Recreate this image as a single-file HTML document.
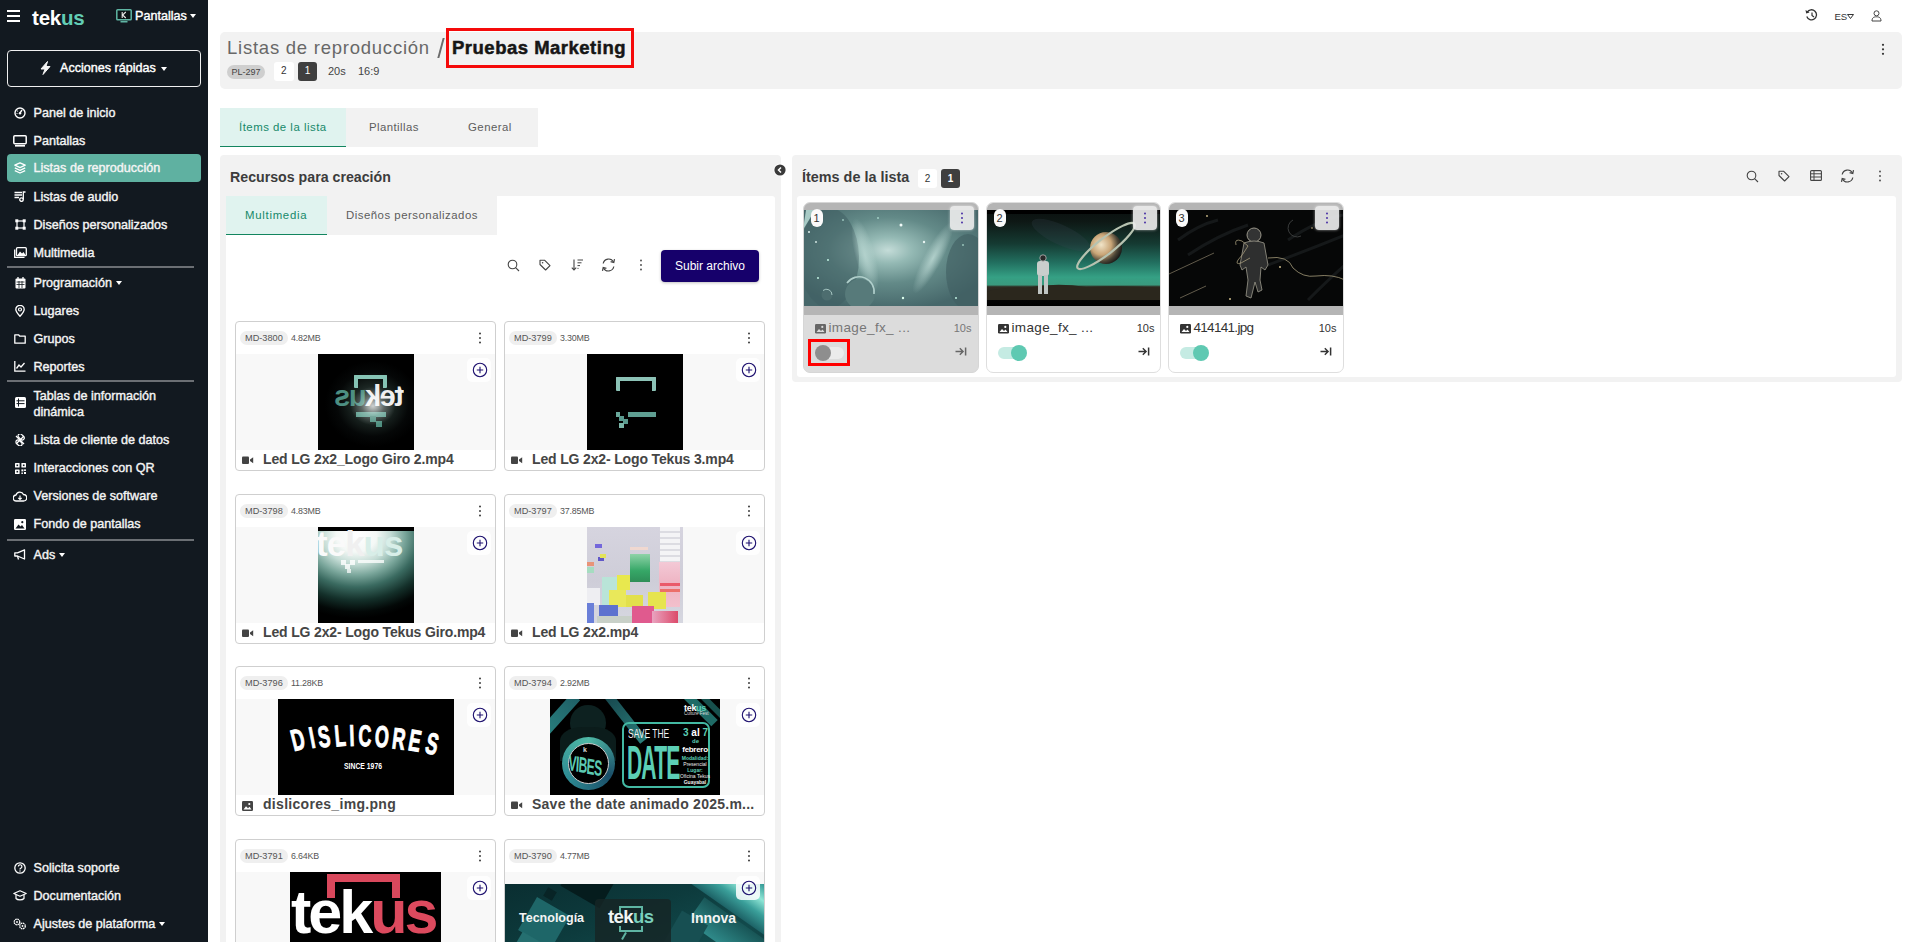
<!DOCTYPE html>
<html><head><meta charset="utf-8">
<style>
*{box-sizing:border-box;margin:0;padding:0}
html,body{width:1913px;height:942px;overflow:hidden;background:#fff;font-family:"Liberation Sans",sans-serif;color:#333}
.abs{position:absolute}
#sb{position:absolute;left:0;top:0;width:208px;height:942px;background:#121920;color:#f4f4f4}
.nav{position:absolute;left:7px;width:194px;height:28px;border-radius:4px;font-size:12.6px;font-weight:normal;-webkit-text-stroke:0.4px #f4f4f4;line-height:28px;padding-left:26.5px;white-space:nowrap}
.nav.act{background:#5fb1a1}
.nav .ic{position:absolute;left:6px;top:0;width:14px;height:28px;display:flex;align-items:center;justify-content:center}
.caret{display:inline-block;margin-left:4px;vertical-align:2px;width:0;height:0;border-left:3.8px solid transparent;border-right:3.8px solid transparent;border-top:4.5px solid #fff}
.sep{position:absolute;left:7px;width:187px;height:2px;background:#6b6f74}
</style></head><body>
<div id="sb">
  <!-- hamburger -->
  <div class="abs" style="left:7px;top:10px;width:13px;height:2px;background:#fff"></div>
  <div class="abs" style="left:7px;top:15px;width:13px;height:2px;background:#fff"></div>
  <div class="abs" style="left:7px;top:20px;width:13px;height:2px;background:#fff"></div>
  <div class="abs t" style="left:32px;top:5.5px;font-size:20.5px;font-weight:bold;letter-spacing:-0.2px;color:#fff">tek<span style="color:#62cdb5">us</span></div>
  <svg class="abs" style="left:116px;top:9px" width="16" height="14" viewBox="0 0 16 14"><rect x="0.8" y="0.8" width="14.4" height="10" rx="0.8" fill="#0d1418" stroke="#5fb5a3" stroke-width="1.5"/><rect x="4.5" y="12" width="7" height="1.5" fill="#5fb5a3"/><path d="M6.2 3 V9 M9.8 3 L6.6 6 L9.8 9" fill="none" stroke="#e8e8e8" stroke-width="1.1"/></svg>
  <div class="abs t" style="left:135px;top:9px;font-size:12.6px;-webkit-text-stroke:0.4px #fff;color:#fff">Pantallas</div>
  <div class="abs" style="left:190px;top:14px;width:0;height:0;border-left:3.5px solid transparent;border-right:3.5px solid transparent;border-top:4px solid #fff"></div>

  <div class="abs" style="left:7px;top:50px;width:194px;height:37px;border:1.6px solid #f0f0f0;border-radius:4px"></div>
  <svg class="abs" style="left:40px;top:61px" width="11" height="14" viewBox="0 0 11 14"><path d="M7.5 0.5 L1 8 H5 L3 13.5 L10 5.5 H6 Z" fill="#f4f4f4" stroke="#f4f4f4" stroke-width="1" stroke-linejoin="round"/></svg>
  <div class="abs t" style="left:60px;top:61px;font-size:12.6px;-webkit-text-stroke:0.4px #fff;color:#fff">Acciones rápidas</div>
  <div class="abs" style="left:160.5px;top:66.5px;width:0;height:0;border-left:3.8px solid transparent;border-right:3.8px solid transparent;border-top:4.5px solid #fff"></div>

  <div class="nav" style="top:98.5px"><i class="ic"><svg width="12" height="12" viewBox="0 0 12 12"><circle cx="6" cy="6" r="5" fill="none" stroke="#fff" stroke-width="1.4"/><path d="M6 6 L8 3" stroke="#fff" stroke-width="1.4"/><circle cx="6" cy="6.3" r="1.2" fill="#fff"/><circle cx="3.5" cy="4" r=".6" fill="#fff"/><circle cx="3" cy="6.5" r=".6" fill="#fff"/></svg></i>Panel de inicio</div>
  <div class="nav" style="top:126.5px"><i class="ic"><svg width="14" height="12" viewBox="0 0 14 12"><rect x="0.8" y="0.8" width="12.4" height="8" rx="1" fill="none" stroke="#fff" stroke-width="1.5"/><rect x="2" y="10" width="10" height="1.6" fill="#fff"/></svg></i>Pantallas</div>
  <div class="nav act" style="top:154px"><i class="ic"><svg width="12" height="12" viewBox="0 0 12 12"><path d="M6 0.8 L11.2 3.2 L6 5.6 L0.8 3.2 Z" fill="none" stroke="#fff" stroke-width="1.3" stroke-linejoin="round"/><path d="M0.8 5.9 L6 8.3 L11.2 5.9 M0.8 8.6 L6 11 L11.2 8.6" fill="none" stroke="#fff" stroke-width="1.3" stroke-linejoin="round"/></svg></i>Listas de reproducción</div>
  <div class="nav" style="top:182.5px"><i class="ic"><svg width="12" height="11" viewBox="0 0 12 11"><path d="M0.5 1.5 H8 M0.5 4 H8 M0.5 6.5 H5" stroke="#fff" stroke-width="1.4"/><circle cx="7.5" cy="8.6" r="1.8" fill="none" stroke="#fff" stroke-width="1.3"/><path d="M9.3 8.6 V1 H11.5" fill="none" stroke="#fff" stroke-width="1.3"/></svg></i>Listas de audio</div>
  <div class="nav" style="top:210.5px"><i class="ic"><svg width="11" height="11" viewBox="0 0 11 11"><rect x="2" y="2" width="7" height="7" fill="none" stroke="#fff" stroke-width="1.2"/><rect x="0.3" y="0.3" width="3" height="3" fill="#fff"/><rect x="7.7" y="0.3" width="3" height="3" fill="#fff"/><rect x="0.3" y="7.7" width="3" height="3" fill="#fff"/><rect x="7.7" y="7.7" width="3" height="3" fill="#fff"/></svg></i>Diseños personalizados</div>
  <div class="nav" style="top:238.5px"><i class="ic"><svg width="13" height="11" viewBox="0 0 13 11"><rect x="2.5" y="0.7" width="9.8" height="8" rx="1" fill="none" stroke="#fff" stroke-width="1.3"/><path d="M0.7 2.5 V10.3 H10.5" fill="none" stroke="#fff" stroke-width="1.3"/><path d="M3.5 8 L6 4.5 L8 6.5 L9.5 5 L11.5 8 Z" fill="#fff"/></svg></i>Multimedia</div>
  <div class="sep" style="top:266px"></div>
  <div class="nav" style="top:268.6px"><i class="ic"><svg width="11" height="12" viewBox="0 0 11 12"><rect x="0.5" y="1.5" width="10" height="10" rx="1" fill="#fff"/><path d="M3 0 V3 M8 0 V3" stroke="#fff" stroke-width="1.3"/><path d="M1.5 5 H9.5 M1.5 7.5 H9.5 M4 4 V11 M7 4 V11" stroke="#121920" stroke-width="0.8"/></svg></i>Programación<span class="caret"></span></div>
  <div class="nav" style="top:296.5px"><i class="ic"><svg width="10" height="12" viewBox="0 0 10 12"><path d="M5 11.3 C2 8 0.8 6 0.8 4.5 A4.2 4.2 0 0 1 9.2 4.5 C9.2 6 8 8 5 11.3 Z" fill="none" stroke="#fff" stroke-width="1.3"/><circle cx="5" cy="4.5" r="1.5" fill="none" stroke="#fff" stroke-width="1.2"/></svg></i>Lugares</div>
  <div class="nav" style="top:324.5px"><i class="ic"><svg width="12" height="10" viewBox="0 0 12 10"><path d="M0.8 0.8 H4.5 L5.8 2.2 H11.2 V9.2 H0.8 Z" fill="none" stroke="#fff" stroke-width="1.3" stroke-linejoin="round"/></svg></i>Grupos</div>
  <div class="nav" style="top:352.5px"><i class="ic"><svg width="12" height="11" viewBox="0 0 12 11"><path d="M0.8 0 V10.2 H11.5" fill="none" stroke="#fff" stroke-width="1.3"/><path d="M2.5 7.5 L5 4 L7 6 L10.5 2" fill="none" stroke="#fff" stroke-width="1.3"/></svg></i>Reportes</div>
  <div class="sep" style="top:380px"></div>
  <div class="nav" style="top:388px;line-height:16px"><i class="ic"><svg width="11" height="11" viewBox="0 0 11 11"><rect x="0" y="0" width="11" height="11" rx="1.5" fill="#fff"/><path d="M3.5 1.5 V9.5 M1.5 3.8 H9.5 M1.5 6.6 H9.5" stroke="#121920" stroke-width="1"/></svg></i>Tablas de información<br>dinámica</div>
  <div class="nav" style="top:426.4px"><i class="ic"><svg width="12" height="12" viewBox="0 0 12 12"><path d="M2 2 L10 10 M10 2 L2 10" stroke="#fff" stroke-width="1.3"/><rect x="3.5" y="0.8" width="7" height="4" rx="2" transform="rotate(45 7 3)" fill="none" stroke="#fff" stroke-width="1.2"/><rect x="1.5" y="7" width="7" height="4" rx="2" transform="rotate(45 5 9)" fill="none" stroke="#fff" stroke-width="1.2"/></svg></i>Lista de cliente de datos</div>
  <div class="nav" style="top:454.4px"><i class="ic"><svg width="11" height="11" viewBox="0 0 11 11"><rect x="0" y="0" width="4.6" height="4.6" rx=".6" fill="#fff"/><rect x="6.4" y="0" width="4.6" height="4.6" rx=".6" fill="#fff"/><rect x="0" y="6.4" width="4.6" height="4.6" rx=".6" fill="#fff"/><rect x="6.4" y="6.4" width="2" height="2" fill="#fff"/><rect x="9" y="9" width="2" height="2" fill="#fff"/><rect x="9" y="6.4" width="2" height="1.5" fill="#fff"/><rect x="6.4" y="9.5" width="1.5" height="1.5" fill="#fff"/><rect x="1.5" y="1.5" width="1.6" height="1.6" fill="#121920"/><rect x="7.9" y="1.5" width="1.6" height="1.6" fill="#121920"/><rect x="1.5" y="7.9" width="1.6" height="1.6" fill="#121920"/></svg></i>Interacciones con QR</div>
  <div class="nav" style="top:482.4px"><i class="ic"><svg width="14" height="11" viewBox="0 0 14 11"><path d="M3.5 10 A3 3 0 0 1 3 4 A4 4 0 0 1 10.5 3.5 A3.2 3.2 0 0 1 10.5 10 Z" fill="none" stroke="#fff" stroke-width="1.3"/><path d="M7 4.5 V8.5 M5.3 6.8 L7 8.5 L8.7 6.8" fill="none" stroke="#fff" stroke-width="1.2"/></svg></i>Versiones de software</div>
  <div class="nav" style="top:510.4px"><i class="ic"><svg width="12" height="11" viewBox="0 0 12 11"><rect x="0" y="0" width="12" height="11" rx="1.2" fill="#fff"/><path d="M1.5 9.5 L4.5 5.5 L6.5 7.5 L8 6 L10.5 9.5 Z" fill="#121920"/><circle cx="8.3" cy="3.2" r="1.1" fill="#121920"/></svg></i>Fondo de pantallas</div>
  <div class="sep" style="top:539px"></div>
  <div class="nav" style="top:540.7px"><i class="ic"><svg width="13" height="11" viewBox="0 0 13 11"><path d="M0.8 3.8 H3.5 L10.5 0.8 V10 L3.5 7 H0.8 Z" fill="none" stroke="#fff" stroke-width="1.3" stroke-linejoin="round"/><path d="M3.5 7 L4.5 10.5" stroke="#fff" stroke-width="1.3"/></svg></i>Ads<span class="caret"></span></div>

  <div class="nav" style="top:853.7px"><i class="ic"><svg width="12" height="12" viewBox="0 0 12 12"><circle cx="6" cy="6" r="5.2" fill="none" stroke="#fff" stroke-width="1.3"/><path d="M4.3 4.6 A1.8 1.8 0 1 1 6.6 6.3 C6.1 6.5 6 6.8 6 7.4" fill="none" stroke="#fff" stroke-width="1.2"/><circle cx="6" cy="9" r=".7" fill="#fff"/></svg></i>Solicita soporte</div>
  <div class="nav" style="top:881.5px"><i class="ic"><svg width="14" height="11" viewBox="0 0 14 11"><path d="M7 0.8 L13.2 3.5 L7 6.2 L0.8 3.5 Z" fill="none" stroke="#fff" stroke-width="1.2" stroke-linejoin="round"/><path d="M3 4.8 V8.5 C4.5 10.3 9.5 10.3 11 8.5 V4.8" fill="none" stroke="#fff" stroke-width="1.2"/></svg></i>Documentación</div>
  <div class="nav" style="top:909.8px"><i class="ic"><svg width="14" height="12" viewBox="0 0 14 12"><circle cx="4" cy="4" r="2.8" fill="none" stroke="#fff" stroke-width="1.3" stroke-dasharray="1.6 .6"/><circle cx="9.5" cy="8" r="2.8" fill="none" stroke="#fff" stroke-width="1.3" stroke-dasharray="1.6 .6"/><circle cx="4" cy="4" r=".9" fill="#fff"/><circle cx="9.5" cy="8" r=".9" fill="#fff"/></svg></i>Ajustes de plataforma<span class="caret"></span></div>
</div>

<!-- MAIN -->
<div id="main">
  <!-- top right -->
  <svg class="abs" style="left:1805px;top:9px" width="13" height="12" viewBox="0 0 13 12"><path d="M2.2 3.2 A5 5 0 1 1 1.8 7.5" fill="none" stroke="#333" stroke-width="1.3"/><path d="M0.5 1 L1.2 4.6 L4.6 3.6 Z" fill="#333"/><path d="M7 3.5 V6.5 L9 8" fill="none" stroke="#333" stroke-width="1.2"/></svg>
  <div class="abs t" style="left:1834.5px;top:10.5px;font-size:9.6px;color:#333;letter-spacing:-0.2px">ES</div>
  <svg class="abs" style="left:1846.5px;top:13.5px" width="7" height="5" viewBox="0 0 7 5"><path d="M0.5 0.5 H6.5 L3.5 4.5 Z" fill="none" stroke="#333" stroke-width="1"/></svg>
  <svg class="abs" style="left:1871px;top:10px" width="11" height="12" viewBox="0 0 11 12"><circle cx="5.5" cy="3.3" r="2.5" fill="none" stroke="#444" stroke-width="1"/><path d="M1 11 C1 7.5 3 6.8 5.5 6.8 C8 6.8 10 7.5 10 11 Z" fill="none" stroke="#444" stroke-width="1"/></svg>

  <!-- header -->
  <div class="abs" style="left:220px;top:32px;width:1682px;height:57px;background:#f2f2f2;border-radius:5px"></div>
  <div class="abs t" id="h1a" style="left:227px;top:37.2px;font-size:18.5px;letter-spacing:0.76px;color:#686868;white-space:nowrap">Listas de reproducción</div>
  <div class="abs" style="left:439.5px;top:37.5px;width:1.6px;height:20px;background:#6c6c6c;transform:skewX(-15deg)"></div>
  <div class="abs t" id="h1b" style="left:452px;top:37.2px;font-size:18.5px;letter-spacing:0.5px;font-weight:bold;color:#161616;-webkit-text-stroke:0.5px #161616;white-space:nowrap">Pruebas Marketing</div>
  <div class="abs" style="left:445.5px;top:27.5px;width:188px;height:40.5px;border:3px solid #f50a0a"></div>
  <div class="abs t" style="left:227px;top:65px;width:38px;height:14px;background:#cfcfcf;border-radius:7px;font-size:9px;line-height:14px;text-align:center;color:#444">PL-297</div>
  <div class="abs t" style="left:274px;top:62px;width:19.5px;height:18.5px;background:#fff;border-radius:3px;font-size:10px;line-height:18px;text-align:center;color:#333">2</div>
  <div class="abs t" style="left:298px;top:62px;width:19px;height:18.5px;background:#3f3f3f;border-radius:3px;font-size:10px;line-height:18px;text-align:center;color:#fff">1</div>
  <div class="abs t" style="left:328px;top:65px;font-size:11px;color:#444">20s</div>
  <div class="abs t" style="left:358px;top:65px;font-size:11px;color:#444">16:9</div>
  <svg class="abs" style="left:1881px;top:43px" width="4" height="13" viewBox="0 0 4 13"><circle cx="2" cy="1.8" r="1.1" fill="#333"/><circle cx="2" cy="6.3" r="1.1" fill="#333"/><circle cx="2" cy="10.8" r="1.1" fill="#333"/></svg>

  <!-- tabs -->
  <div class="abs" style="left:220px;top:108px;width:318px;height:39px;background:#f2f2f2"></div>
  <div class="abs" style="left:220px;top:108px;width:126px;height:39px;background:#e0f3ef;border-bottom:1.5px solid #12855f"></div>
  <div class="abs t" style="left:239px;top:120.5px;font-size:11.4px;letter-spacing:0.5px;color:#16896a">Ítems de la lista</div>
  <div class="abs t" style="left:369px;top:120.5px;font-size:11.4px;letter-spacing:0.42px;color:#5c5c5c">Plantillas</div>
  <div class="abs t" style="left:468px;top:120.5px;font-size:11.4px;letter-spacing:0.48px;color:#5c5c5c">General</div>

  <!-- left panel -->
  <div class="abs" style="left:220px;top:155px;width:561px;height:800px;background:#f2f2f2;border-radius:4px"></div>
  <div class="abs t" style="left:230px;top:169px;font-size:14.2px;font-weight:bold;color:#3c3c3c">Recursos para creación</div>
  <div class="abs" style="left:226px;top:196px;width:549px;height:760px;background:#fff;border-radius:3px"></div>
  <div class="abs" style="left:226px;top:196px;width:271px;height:39px;background:#f2f2f2"></div>
  <div class="abs" style="left:226px;top:196px;width:101px;height:39px;background:#e0f3ef;border-bottom:1.5px solid #12855f"></div>
  <div class="abs t" style="left:245px;top:208.5px;font-size:11.4px;letter-spacing:0.72px;color:#16896a">Multimedia</div>
  <div class="abs t" style="left:346px;top:208.5px;font-size:11.4px;letter-spacing:0.5px;color:#5c5c5c">Diseños personalizados</div>
  <svg class="abs" style="left:773px;top:163px" width="14" height="14" viewBox="0 0 14 14"><circle cx="7" cy="7" r="6.5" fill="#fff"/><circle cx="7" cy="7" r="5.6" fill="#3a3a3a"/><path d="M8 4.5 L5.5 7 L8 9.5" fill="none" stroke="#fff" stroke-width="1.5"/></svg>

  <!-- toolbar -->
  <svg class="abs" style="left:507px;top:259px" width="13" height="13" viewBox="0 0 13 13"><circle cx="5.5" cy="5.5" r="4.3" fill="none" stroke="#444" stroke-width="1.1"/><path d="M8.6 8.6 L12 12" stroke="#444" stroke-width="1.1"/></svg>
  <svg class="abs" style="left:539px;top:259px" width="12" height="12" viewBox="0 0 12 12"><path d="M1 1.2 H5.5 L11 6.6 L6.6 11 L1 5.5 Z" fill="none" stroke="#444" stroke-width="1.1" stroke-linejoin="round"/><circle cx="3.6" cy="3.7" r="0.8" fill="#444"/></svg>
  <svg class="abs" style="left:571px;top:259px" width="13" height="12" viewBox="0 0 13 12"><path d="M3 0.5 V11 M0.8 8.6 L3 11 L5.2 8.6" fill="none" stroke="#444" stroke-width="1.1"/><path d="M6.5 1 H12 M6.5 3.8 H10.5 M6.5 6.6 H9 M6.5 9.4 H7.5" stroke="#444" stroke-width="1"/></svg>
  <svg class="abs" style="left:601px;top:257px" width="15" height="16" viewBox="0 0 15 16"><path d="M2.2 6.5 A5.5 5.5 0 0 1 12.5 5" fill="none" stroke="#444" stroke-width="1.2"/><path d="M12.8 9.5 A5.5 5.5 0 0 1 2.5 11" fill="none" stroke="#444" stroke-width="1.2"/><path d="M13.5 2.2 L12.8 5.6 L9.6 4.6" fill="none" stroke="#444" stroke-width="1.2"/><path d="M1.5 13.8 L2.2 10.4 L5.4 11.4" fill="none" stroke="#444" stroke-width="1.2"/></svg>
  <svg class="abs" style="left:639px;top:259px" width="4" height="12" viewBox="0 0 4 12"><circle cx="2" cy="1.5" r="0.9" fill="#444"/><circle cx="2" cy="6" r="0.9" fill="#444"/><circle cx="2" cy="10.5" r="0.9" fill="#444"/></svg>
  <div class="abs t" style="left:661px;top:250px;width:98px;height:32px;background:#16006b;border-radius:4px;box-shadow:0 1px 3px rgba(0,0,0,.25);font-size:12px;line-height:32px;text-align:center;color:#fff">Subir archivo</div>

  <!-- MEDIA CARDS -->
  <div id="cards"><div class="abs mc" style="left:235px;top:321px;width:261px;height:150px">
  <div class="abs" style="left:0;top:0;width:261px;height:150px;border:1px solid #cfcfcf;border-radius:4px;background:#fff"></div>
  <div class="abs" style="left:1px;top:33px;width:259px;height:96px;background:#f8f8f8;overflow:hidden"><div class="abs" style="left:82px;top:0;width:96px;height:96px;background:radial-gradient(ellipse 50% 45% at 57% 52%,#3b4a46 0,#18221f 45%,#050707 75%,#000 100%);overflow:hidden">
<div class="abs" style="left:36px;top:21px;width:33px;height:13px;border:4px solid #86c4b5;border-bottom:none;border-radius:1px"></div>
<div class="abs" style="left:38px;top:58px;width:30px;height:5px;background:#5f9f90"></div>
<div class="abs" style="left:52px;top:62px;width:6px;height:6px;background:#4f8f80"></div><div class="abs" style="left:58px;top:67px;width:6px;height:6px;background:#4f8f80"></div>
<div class="abs" style="left:22px;top:22px;width:64px;font-size:29px;font-weight:bold;letter-spacing:-1.5px;line-height:40px;transform:scaleX(-1);white-space:nowrap"><span style="color:#eeeeee">tek</span><span style="color:#4d8f82">us</span></div>
<div class="abs" style="left:20px;top:16px;width:70px;height:60px;background:radial-gradient(ellipse 40% 40% at 50% 60%,rgba(255,255,255,.75) 0,rgba(255,255,255,.25) 40%,rgba(255,255,255,0) 80%)"></div>
</div></div>
  <div class="abs t mb" style="left:5px;top:10px;padding:0 5px;height:14px;background:#efefef;border-radius:7px;font-size:9.2px;line-height:14px;color:#555">MD-3800</div>
  <div class="abs t" style="left:56px;top:11.5px;font-size:8.9px;color:#555;letter-spacing:-0.2px">4.82MB</div>
  <svg class="abs" style="left:242.5px;top:11px" width="4" height="12" viewBox="0 0 4 12"><circle cx="2" cy="1.5" r="0.95" fill="#333"/><circle cx="2" cy="6" r="0.95" fill="#333"/><circle cx="2" cy="10.5" r="0.95" fill="#333"/></svg><div class="abs" style="left:232px;top:37px;width:24px;height:24px;background:rgba(255,255,255,.85);border-radius:5px"></div><svg class="abs" style="left:236.5px;top:40.5px" width="16" height="16" viewBox="0 0 16 16"><circle cx="8" cy="8" r="6.7" fill="none" stroke="#1c0f6e" stroke-width="1.1"/><path d="M8 4.8 V11.2 M4.8 8 H11.2" stroke="#1c0f6e" stroke-width="1.1"/></svg>
  <svg class="abs" style="left:7px;top:135px" width="12" height="9" viewBox="0 0 12 9"><rect x="0" y="0.5" width="7" height="7.5" rx="1" fill="#444"/><path d="M8 3.5 L11.2 1.2 V7.3 L8 5 Z" fill="#444"/></svg>
  <div class="abs t mt" style="left:28px;top:129.5px;width:235px;font-size:14px;font-weight:bold;color:#454545;white-space:nowrap;overflow:hidden;letter-spacing:-0.15px">Led LG 2x2_Logo Giro 2.mp4</div>
</div><div class="abs mc" style="left:504px;top:321px;width:261px;height:150px">
  <div class="abs" style="left:0;top:0;width:261px;height:150px;border:1px solid #cfcfcf;border-radius:4px;background:#fff"></div>
  <div class="abs" style="left:1px;top:33px;width:259px;height:96px;background:#f8f8f8;overflow:hidden"><div class="abs" style="left:82px;top:0;width:96px;height:96px;background:#000">
<div class="abs" style="left:29px;top:23px;width:40px;height:14px;border:4.5px solid #8cc2b6;border-bottom:none;border-radius:1px"></div>
<div class="abs" style="left:41px;top:58px;width:28px;height:5px;background:#5f9e92"></div>
<div class="abs" style="left:29px;top:58px;width:4px;height:5px;background:#6aa89b"></div>
<div class="abs" style="left:32px;top:62px;width:5px;height:5px;background:#5a9a8e"></div>
<div class="abs" style="left:36px;top:65px;width:5px;height:5px;background:#5a9a8e"></div>
<div class="abs" style="left:32px;top:69px;width:5px;height:5px;background:#7ab5a8"></div>
</div></div>
  <div class="abs t mb" style="left:5px;top:10px;padding:0 5px;height:14px;background:#efefef;border-radius:7px;font-size:9.2px;line-height:14px;color:#555">MD-3799</div>
  <div class="abs t" style="left:56px;top:11.5px;font-size:8.9px;color:#555;letter-spacing:-0.2px">3.30MB</div>
  <svg class="abs" style="left:242.5px;top:11px" width="4" height="12" viewBox="0 0 4 12"><circle cx="2" cy="1.5" r="0.95" fill="#333"/><circle cx="2" cy="6" r="0.95" fill="#333"/><circle cx="2" cy="10.5" r="0.95" fill="#333"/></svg><div class="abs" style="left:232px;top:37px;width:24px;height:24px;background:rgba(255,255,255,.85);border-radius:5px"></div><svg class="abs" style="left:236.5px;top:40.5px" width="16" height="16" viewBox="0 0 16 16"><circle cx="8" cy="8" r="6.7" fill="none" stroke="#1c0f6e" stroke-width="1.1"/><path d="M8 4.8 V11.2 M4.8 8 H11.2" stroke="#1c0f6e" stroke-width="1.1"/></svg>
  <svg class="abs" style="left:7px;top:135px" width="12" height="9" viewBox="0 0 12 9"><rect x="0" y="0.5" width="7" height="7.5" rx="1" fill="#444"/><path d="M8 3.5 L11.2 1.2 V7.3 L8 5 Z" fill="#444"/></svg>
  <div class="abs t mt" style="left:28px;top:129.5px;width:235px;font-size:14px;font-weight:bold;color:#454545;white-space:nowrap;overflow:hidden;letter-spacing:-0.15px">Led LG 2x2- Logo Tekus 3.mp4</div>
</div><div class="abs mc" style="left:235px;top:494px;width:261px;height:150px">
  <div class="abs" style="left:0;top:0;width:261px;height:150px;border:1px solid #cfcfcf;border-radius:4px;background:#fff"></div>
  <div class="abs" style="left:1px;top:33px;width:259px;height:96px;background:#f8f8f8;overflow:hidden"><div class="abs" style="left:82px;top:0;width:96px;height:96px;background:#000;overflow:hidden">
<div class="abs" style="left:0;top:4px;width:96px;height:92px;background:radial-gradient(ellipse 105% 90% at 40% 5%,#ffffff 0,#f4f8f6 20%,#c4dcd5 34%,#7aa69b 48%,#3a6a60 62%,#14302a 78%,#030807 92%,#000 100%)"></div>
<div class="abs" style="left:-2px;top:-3px;font-size:35px;font-weight:bold;color:#fafafa;letter-spacing:-1px;line-height:40px;white-space:nowrap">te<span style="color:#f0f0f0">k</span><span style="color:#d8eee8">us</span></div>
<div class="abs" style="left:40px;top:33px;width:26px;height:3px;background:rgba(255,255,255,.75)"></div><div class="abs" style="left:23px;top:33px;width:5px;height:5px;background:rgba(255,255,255,.8)"></div><div class="abs" style="left:27px;top:37px;width:5px;height:5px;background:rgba(255,255,255,.8)"></div><div class="abs" style="left:32px;top:33px;width:5px;height:5px;background:rgba(255,255,255,.8)"></div><div class="abs" style="left:29px;top:42px;width:4px;height:4px;background:rgba(255,255,255,.7)"></div>
</div></div>
  <div class="abs t mb" style="left:5px;top:10px;padding:0 5px;height:14px;background:#efefef;border-radius:7px;font-size:9.2px;line-height:14px;color:#555">MD-3798</div>
  <div class="abs t" style="left:56px;top:11.5px;font-size:8.9px;color:#555;letter-spacing:-0.2px">4.83MB</div>
  <svg class="abs" style="left:242.5px;top:11px" width="4" height="12" viewBox="0 0 4 12"><circle cx="2" cy="1.5" r="0.95" fill="#333"/><circle cx="2" cy="6" r="0.95" fill="#333"/><circle cx="2" cy="10.5" r="0.95" fill="#333"/></svg><div class="abs" style="left:232px;top:37px;width:24px;height:24px;background:rgba(255,255,255,.85);border-radius:5px"></div><svg class="abs" style="left:236.5px;top:40.5px" width="16" height="16" viewBox="0 0 16 16"><circle cx="8" cy="8" r="6.7" fill="none" stroke="#1c0f6e" stroke-width="1.1"/><path d="M8 4.8 V11.2 M4.8 8 H11.2" stroke="#1c0f6e" stroke-width="1.1"/></svg>
  <svg class="abs" style="left:7px;top:135px" width="12" height="9" viewBox="0 0 12 9"><rect x="0" y="0.5" width="7" height="7.5" rx="1" fill="#444"/><path d="M8 3.5 L11.2 1.2 V7.3 L8 5 Z" fill="#444"/></svg>
  <div class="abs t mt" style="left:28px;top:129.5px;width:235px;font-size:14px;font-weight:bold;color:#454545;white-space:nowrap;overflow:hidden;letter-spacing:-0.15px">Led LG 2x2- Logo Tekus Giro.mp4</div>
</div><div class="abs mc" style="left:504px;top:494px;width:261px;height:150px">
  <div class="abs" style="left:0;top:0;width:261px;height:150px;border:1px solid #cfcfcf;border-radius:4px;background:#fff"></div>
  <div class="abs" style="left:1px;top:33px;width:259px;height:96px;background:#f8f8f8;overflow:hidden"><div class="abs" style="left:82px;top:0;width:96px;height:96px;background:linear-gradient(180deg,#d6d4df 0,#cecdd8 55%,#d6d7e0 100%);overflow:hidden">
<div class="abs" style="left:73px;top:0;width:20px;height:36px;background:repeating-linear-gradient(180deg,#f4f4f6 0,#f4f4f6 4px,#dcdce2 4px,#dcdce2 6px)"></div>
<div class="abs" style="left:72px;top:35px;width:21px;height:45px;background:linear-gradient(180deg,#f3c9d6,#eeb3c2 50%,#f3c0cc)"></div>
<div class="abs" style="left:73px;top:56px;width:20px;height:3px;background:#ea5a6a"></div><div class="abs" style="left:73px;top:62px;width:20px;height:3px;background:#ec6f6a"></div>
<div class="abs" style="left:43px;top:27px;width:20px;height:28px;background:linear-gradient(180deg,#8fd3a8,#36a767 60%,#2e8e58)"></div>
<div class="abs" style="left:15px;top:50px;width:20px;height:28px;background:#b9e4d8"></div>
<div class="abs" style="left:0;top:61px;width:13px;height:17px;background:#eeeef2"></div>
<div class="abs" style="left:30px;top:48px;width:13px;height:15px;background:#e8e84e"></div>
<div class="abs" style="left:22px;top:63px;width:17px;height:17px;background:#e9e85a"></div>
<div class="abs" style="left:39px;top:68px;width:17px;height:12px;background:#e2e04c"></div>
<div class="abs" style="left:61px;top:65px;width:18px;height:17px;background:#e6e44e"></div>
<div class="abs" style="left:12px;top:78px;width:19px;height:11px;background:#5d72cf"></div>
<div class="abs" style="left:0;top:76px;width:7px;height:20px;background:#6a7fd8"></div>
<div class="abs" style="left:10px;top:89px;width:44px;height:7px;background:#c8d0c8"></div>
<div class="abs" style="left:45px;top:79px;width:22px;height:17px;background:#e05a8e"></div>
<div class="abs" style="left:65px;top:84px;width:26px;height:12px;background:linear-gradient(90deg,#e9a3c0,#dc4a6a)"></div>
<div class="abs" style="left:8px;top:17px;width:7px;height:4px;background:#7467db"></div>
<div class="abs" style="left:11px;top:30px;width:6px;height:4px;background:#6158c8"></div>
<div class="abs" style="left:13px;top:27px;width:6px;height:4px;background:#e3e35a"></div>
<div class="abs" style="left:0;top:35px;width:7px;height:4px;background:#e89378"></div>
<div class="abs" style="left:0;top:40px;width:7px;height:6px;background:#a5dcc0"></div>
<div class="abs" style="left:43px;top:20px;width:18px;height:3px;background:#f0d8d0"></div>
</div></div>
  <div class="abs t mb" style="left:5px;top:10px;padding:0 5px;height:14px;background:#efefef;border-radius:7px;font-size:9.2px;line-height:14px;color:#555">MD-3797</div>
  <div class="abs t" style="left:56px;top:11.5px;font-size:8.9px;color:#555;letter-spacing:-0.2px">37.85MB</div>
  <svg class="abs" style="left:242.5px;top:11px" width="4" height="12" viewBox="0 0 4 12"><circle cx="2" cy="1.5" r="0.95" fill="#333"/><circle cx="2" cy="6" r="0.95" fill="#333"/><circle cx="2" cy="10.5" r="0.95" fill="#333"/></svg><div class="abs" style="left:232px;top:37px;width:24px;height:24px;background:rgba(255,255,255,.85);border-radius:5px"></div><svg class="abs" style="left:236.5px;top:40.5px" width="16" height="16" viewBox="0 0 16 16"><circle cx="8" cy="8" r="6.7" fill="none" stroke="#1c0f6e" stroke-width="1.1"/><path d="M8 4.8 V11.2 M4.8 8 H11.2" stroke="#1c0f6e" stroke-width="1.1"/></svg>
  <svg class="abs" style="left:7px;top:135px" width="12" height="9" viewBox="0 0 12 9"><rect x="0" y="0.5" width="7" height="7.5" rx="1" fill="#444"/><path d="M8 3.5 L11.2 1.2 V7.3 L8 5 Z" fill="#444"/></svg>
  <div class="abs t mt" style="left:28px;top:129.5px;width:235px;font-size:14px;font-weight:bold;color:#454545;white-space:nowrap;overflow:hidden;letter-spacing:-0.15px">Led LG 2x2.mp4</div>
</div><div class="abs mc" style="left:235px;top:666px;width:261px;height:150px">
  <div class="abs" style="left:0;top:0;width:261px;height:150px;border:1px solid #cfcfcf;border-radius:4px;background:#fff"></div>
  <div class="abs" style="left:1px;top:33px;width:259px;height:96px;background:#f8f8f8;overflow:hidden"><div class="abs" style="left:42px;top:0;width:176px;height:96px;background:#000;overflow:hidden"><div class="abs" style="left:8.0px;top:23.5px;width:24px;text-align:center;font-size:30px;line-height:34px;font-weight:bold;color:#fff;-webkit-text-stroke:1px #fff;transform:rotate(-14deg) scaleX(.6)">D</div><div class="abs" style="left:21.5px;top:21.5px;width:24px;text-align:center;font-size:30px;line-height:34px;font-weight:bold;color:#fff;-webkit-text-stroke:1px #fff;transform:rotate(-11deg) scaleX(.6)">I</div><div class="abs" style="left:33.5px;top:20.5px;width:24px;text-align:center;font-size:30px;line-height:34px;font-weight:bold;color:#fff;-webkit-text-stroke:1px #fff;transform:rotate(-8deg) scaleX(.6)">S</div><div class="abs" style="left:49.5px;top:20.0px;width:24px;text-align:center;font-size:30px;line-height:34px;font-weight:bold;color:#fff;-webkit-text-stroke:1px #fff;transform:rotate(-5deg) scaleX(.6)">L</div><div class="abs" style="left:62.0px;top:20.0px;width:24px;text-align:center;font-size:30px;line-height:34px;font-weight:bold;color:#fff;-webkit-text-stroke:1px #fff;transform:rotate(-2deg) scaleX(.6)">I</div><div class="abs" style="left:75.0px;top:20.0px;width:24px;text-align:center;font-size:30px;line-height:34px;font-weight:bold;color:#fff;-webkit-text-stroke:1px #fff;transform:rotate(1deg) scaleX(.6)">C</div><div class="abs" style="left:91.5px;top:20.5px;width:24px;text-align:center;font-size:30px;line-height:34px;font-weight:bold;color:#fff;-webkit-text-stroke:1px #fff;transform:rotate(4deg) scaleX(.6)">O</div><div class="abs" style="left:108.5px;top:22.5px;width:24px;text-align:center;font-size:30px;line-height:34px;font-weight:bold;color:#fff;-webkit-text-stroke:1px #fff;transform:rotate(7deg) scaleX(.6)">R</div><div class="abs" style="left:125.0px;top:24.5px;width:24px;text-align:center;font-size:30px;line-height:34px;font-weight:bold;color:#fff;-webkit-text-stroke:1px #fff;transform:rotate(10deg) scaleX(.6)">E</div><div class="abs" style="left:142.0px;top:27.5px;width:24px;text-align:center;font-size:30px;line-height:34px;font-weight:bold;color:#fff;-webkit-text-stroke:1px #fff;transform:rotate(13deg) scaleX(.6)">S</div><div class="abs" style="left:-3px;top:61px;width:176px;text-align:center;font-size:9.5px;line-height:11px;font-weight:bold;color:#fff;transform:scaleX(.72)">SINCE 1976</div></div></div>
  <div class="abs t mb" style="left:5px;top:10px;padding:0 5px;height:14px;background:#efefef;border-radius:7px;font-size:9.2px;line-height:14px;color:#555">MD-3796</div>
  <div class="abs t" style="left:56px;top:11.5px;font-size:8.9px;color:#555;letter-spacing:-0.2px">11.28KB</div>
  <svg class="abs" style="left:242.5px;top:11px" width="4" height="12" viewBox="0 0 4 12"><circle cx="2" cy="1.5" r="0.95" fill="#333"/><circle cx="2" cy="6" r="0.95" fill="#333"/><circle cx="2" cy="10.5" r="0.95" fill="#333"/></svg><div class="abs" style="left:232px;top:37px;width:24px;height:24px;background:rgba(255,255,255,.85);border-radius:5px"></div><svg class="abs" style="left:236.5px;top:40.5px" width="16" height="16" viewBox="0 0 16 16"><circle cx="8" cy="8" r="6.7" fill="none" stroke="#1c0f6e" stroke-width="1.1"/><path d="M8 4.8 V11.2 M4.8 8 H11.2" stroke="#1c0f6e" stroke-width="1.1"/></svg>
  <svg class="abs" style="left:6.5px;top:134.5px" width="11" height="10" viewBox="0 0 11 10"><rect x="0" y="0" width="11" height="10" rx="1.2" fill="#444"/><path d="M1.5 8.5 L4 5.2 L6 7.2 L7.5 5.8 L9.5 8.5 Z" fill="#fff"/><circle cx="7.3" cy="3" r="1.1" fill="#fff"/></svg>
  <div class="abs t mt" style="left:28px;top:129.5px;width:235px;font-size:14px;font-weight:bold;color:#454545;white-space:nowrap;overflow:hidden;letter-spacing:0.3px">dislicores_img.png</div>
</div><div class="abs mc" style="left:504px;top:666px;width:261px;height:150px">
  <div class="abs" style="left:0;top:0;width:261px;height:150px;border:1px solid #cfcfcf;border-radius:4px;background:#fff"></div>
  <div class="abs" style="left:1px;top:33px;width:259px;height:96px;background:#f8f8f8;overflow:hidden"><div class="abs" style="left:45px;top:0;width:170px;height:96px;background:#000;overflow:hidden">
<div class="abs" style="left:-12px;top:-6px;width:11px;height:62px;background:linear-gradient(180deg,#1f5f66,#2c8a86);transform:rotate(42deg);transform-origin:top left;left:22px"></div>
<div class="abs" style="left:52px;top:-4px;width:9px;height:62px;background:linear-gradient(180deg,#15434a,#2a7e7a);transform:rotate(-38deg);transform-origin:top left"></div>
<div class="abs" style="left:126px;top:-8px;width:9px;height:50px;background:#1f6b66;transform:rotate(-45deg);transform-origin:top left"></div>
<div class="abs" style="left:143px;top:-8px;width:6px;height:40px;background:#17504d;transform:rotate(-45deg);transform-origin:top left"></div>
<div class="abs" style="left:20px;top:6px;width:36px;height:36px;border-radius:50%;background:#0d2120"></div>
<div class="abs" style="left:10px;top:28px;width:56px;height:34px;border-radius:40% 40% 0 0;background:#0b1c1b"></div>
<div class="abs" style="left:12px;top:38px;width:53px;height:53px;border-radius:50%;background:conic-gradient(#4fb9a6,#1a4e68,#2f8d94,#4fb9a6)"></div>
<div class="abs" style="left:18px;top:44px;width:41px;height:41px;border-radius:50%;background:#000;border:1px solid #ccc"></div>
<div class="abs" style="left:19px;top:52px;font-size:22px;line-height:24px;font-weight:bold;color:#5ccab3;transform:scaleX(.55) rotate(6deg);transform-origin:left top;letter-spacing:-1px">VIBES</div>
<div class="abs" style="left:33px;top:47px;font-size:7px;color:#ddd;font-weight:bold">k</div>
<div class="abs" style="left:72px;top:23px;width:88px;height:66px;border:2px solid #43b9a3;border-radius:7px"></div>
<div class="abs" style="left:78px;top:28px;font-size:12.5px;line-height:14px;color:#f2f2f2;transform:scaleX(.68);transform-origin:left top;white-space:nowrap">SAVE THE</div>
<div class="abs" style="left:77px;top:38px;font-size:48px;line-height:52px;font-weight:bold;color:#5ccfb5;transform:scaleX(.44);transform-origin:left top;letter-spacing:-2px">DATE</div>
<div class="abs" style="left:130px;top:28px;width:31px;text-align:center;font-size:10px;line-height:11px;font-weight:bold;color:#fff"><span style="color:#5ccfb5">3</span> al <span style="color:#5ccfb5">7</span></div>
<div class="abs" style="left:130px;top:39px;width:31px;text-align:center;font-size:6px;line-height:7px;font-weight:bold;color:#5ccfb5">de</div>
<div class="abs" style="left:128px;top:46px;width:34px;text-align:center;font-size:8px;line-height:10px;font-weight:bold;color:#fff;letter-spacing:-.3px">febrero</div>
<div class="abs" style="left:128px;top:56px;width:34px;text-align:center;font-size:5px;line-height:6px;color:#eee"><b style="color:#5ccfb5">Modalidad:</b><br>Presencial<br><b style="color:#5ccfb5">Lugar:</b><br>Oficina Tekus<br><b>Guayabal</b></div>
<div class="abs" style="left:134px;top:4px;font-size:9px;line-height:10px;font-weight:bold;color:#fff;letter-spacing:-.3px">tek<span style="color:#5ccfb5">us</span></div>
<div class="abs" style="left:134px;top:12px;font-size:4.5px;color:#ddd">Culture Fest</div>
</div></div>
  <div class="abs t mb" style="left:5px;top:10px;padding:0 5px;height:14px;background:#efefef;border-radius:7px;font-size:9.2px;line-height:14px;color:#555">MD-3794</div>
  <div class="abs t" style="left:56px;top:11.5px;font-size:8.9px;color:#555;letter-spacing:-0.2px">2.92MB</div>
  <svg class="abs" style="left:242.5px;top:11px" width="4" height="12" viewBox="0 0 4 12"><circle cx="2" cy="1.5" r="0.95" fill="#333"/><circle cx="2" cy="6" r="0.95" fill="#333"/><circle cx="2" cy="10.5" r="0.95" fill="#333"/></svg><div class="abs" style="left:232px;top:37px;width:24px;height:24px;background:rgba(255,255,255,.85);border-radius:5px"></div><svg class="abs" style="left:236.5px;top:40.5px" width="16" height="16" viewBox="0 0 16 16"><circle cx="8" cy="8" r="6.7" fill="none" stroke="#1c0f6e" stroke-width="1.1"/><path d="M8 4.8 V11.2 M4.8 8 H11.2" stroke="#1c0f6e" stroke-width="1.1"/></svg>
  <svg class="abs" style="left:7px;top:135px" width="12" height="9" viewBox="0 0 12 9"><rect x="0" y="0.5" width="7" height="7.5" rx="1" fill="#444"/><path d="M8 3.5 L11.2 1.2 V7.3 L8 5 Z" fill="#444"/></svg>
  <div class="abs t mt" style="left:28px;top:129.5px;width:235px;font-size:14px;font-weight:bold;color:#454545;white-space:nowrap;overflow:hidden;letter-spacing:0.25px">Save the date animado 2025.m...</div>
</div><div class="abs mc" style="left:235px;top:839px;width:261px;height:150px">
  <div class="abs" style="left:0;top:0;width:261px;height:150px;border:1px solid #cfcfcf;border-radius:4px;background:#fff"></div>
  <div class="abs" style="left:1px;top:33px;width:259px;height:96px;background:#f8f8f8;overflow:hidden"><div class="abs" style="left:54px;top:0;width:151px;height:96px;background:#000;overflow:hidden">
<div class="abs" style="left:37px;top:2px;width:73px;height:24px;border:8px solid #d9485c;border-bottom:none"></div>
<div class="abs" style="left:37px;top:90px;width:73px;height:10px;border:6px solid #d9485c;border-top:none"></div>
<div class="abs" style="left:1px;top:5px;font-size:61px;line-height:70px;font-weight:bold;letter-spacing:-3px;color:#fff;white-space:nowrap">tek<span style="color:#dc4a5e">us</span></div>

</div></div>
  <div class="abs t mb" style="left:5px;top:10px;padding:0 5px;height:14px;background:#efefef;border-radius:7px;font-size:9.2px;line-height:14px;color:#555">MD-3791</div>
  <div class="abs t" style="left:56px;top:11.5px;font-size:8.9px;color:#555;letter-spacing:-0.2px">6.64KB</div>
  <svg class="abs" style="left:242.5px;top:11px" width="4" height="12" viewBox="0 0 4 12"><circle cx="2" cy="1.5" r="0.95" fill="#333"/><circle cx="2" cy="6" r="0.95" fill="#333"/><circle cx="2" cy="10.5" r="0.95" fill="#333"/></svg><div class="abs" style="left:232px;top:37px;width:24px;height:24px;background:rgba(255,255,255,.85);border-radius:5px"></div><svg class="abs" style="left:236.5px;top:40.5px" width="16" height="16" viewBox="0 0 16 16"><circle cx="8" cy="8" r="6.7" fill="none" stroke="#1c0f6e" stroke-width="1.1"/><path d="M8 4.8 V11.2 M4.8 8 H11.2" stroke="#1c0f6e" stroke-width="1.1"/></svg>
  <svg class="abs" style="left:6.5px;top:134.5px" width="11" height="10" viewBox="0 0 11 10"><rect x="0" y="0" width="11" height="10" rx="1.2" fill="#444"/><path d="M1.5 8.5 L4 5.2 L6 7.2 L7.5 5.8 L9.5 8.5 Z" fill="#fff"/><circle cx="7.3" cy="3" r="1.1" fill="#fff"/></svg>
  <div class="abs t mt" style="left:28px;top:129.5px;width:235px;font-size:14px;font-weight:bold;color:#454545;white-space:nowrap;overflow:hidden;letter-spacing:-0.15px"></div>
</div><div class="abs mc" style="left:504px;top:839px;width:261px;height:150px">
  <div class="abs" style="left:0;top:0;width:261px;height:150px;border:1px solid #cfcfcf;border-radius:4px;background:#fff"></div>
  <div class="abs" style="left:1px;top:33px;width:259px;height:96px;background:#f8f8f8;overflow:hidden"><div class="abs" style="left:0;top:11.5px;width:259px;height:90px;overflow:hidden;background:linear-gradient(160deg,#0a2e31 0,#0d3b3d 40%,#124a4c 70%,#0f3a3c 100%)">
<div class="abs" style="left:205px;top:-75px;width:50px;height:150px;background:linear-gradient(90deg,#1d6266,#3a9f9a 30%,#8fe6d6 55%,#3a9f9a 80%,#1d6266);transform:rotate(-55deg)"></div>
<div class="abs" style="left:225px;top:0px;width:30px;height:120px;background:linear-gradient(90deg,#2f8a8a,#185556);transform:rotate(-55deg)"></div>
<div class="abs" style="left:20px;top:20px;width:38px;height:38px;background:#1e6668;transform:rotate(30deg)"></div>
<div class="abs" style="left:5px;top:55px;width:40px;height:40px;background:#256f70;transform:rotate(30deg)"></div>
<div class="abs" style="left:60px;top:-15px;width:45px;height:30px;background:#051c1d;transform:rotate(30deg)"></div>
<div class="abs" style="left:40px;top:5px;width:10px;height:10px;background:#082426;transform:rotate(30deg)"></div>
<div class="abs" style="left:160px;top:30px;width:30px;height:60px;background:#174f52;transform:rotate(30deg)"></div>
<div class="abs" style="left:90px;top:15px;width:76px;height:80px;background:rgba(22,36,36,.82);border-radius:4px"></div>
<div class="abs" style="left:14px;top:27px;font-size:12.5px;font-weight:bold;color:#f4f4f4">Tecnología</div>
<div class="abs" style="left:114px;top:22.5px;width:24px;height:8px;border:2px solid #5fb5a3;border-bottom:none"></div>
<div class="abs" style="left:114px;top:42px;width:24px;height:6px;border:2px solid #5fb5a3;border-top:none"></div>
<div class="abs" style="left:118px;top:48px;width:2px;height:8px;background:#5fb5a3;transform:rotate(30deg)"></div>
<div class="abs" style="left:103px;top:23px;font-size:18.5px;line-height:20px;font-weight:bold;color:#f2f6f4;letter-spacing:-0.6px">tek<span style="color:#7ad0bd">us</span></div>
<div class="abs" style="left:186px;top:26px;font-size:14px;font-weight:bold;color:#f4f4f4">Innova</div>
</div></div>
  <div class="abs t mb" style="left:5px;top:10px;padding:0 5px;height:14px;background:#efefef;border-radius:7px;font-size:9.2px;line-height:14px;color:#555">MD-3790</div>
  <div class="abs t" style="left:56px;top:11.5px;font-size:8.9px;color:#555;letter-spacing:-0.2px">4.77MB</div>
  <svg class="abs" style="left:242.5px;top:11px" width="4" height="12" viewBox="0 0 4 12"><circle cx="2" cy="1.5" r="0.95" fill="#333"/><circle cx="2" cy="6" r="0.95" fill="#333"/><circle cx="2" cy="10.5" r="0.95" fill="#333"/></svg><div class="abs" style="left:232px;top:37px;width:24px;height:24px;background:rgba(255,255,255,.85);border-radius:5px"></div><svg class="abs" style="left:236.5px;top:40.5px" width="16" height="16" viewBox="0 0 16 16"><circle cx="8" cy="8" r="6.7" fill="none" stroke="#1c0f6e" stroke-width="1.1"/><path d="M8 4.8 V11.2 M4.8 8 H11.2" stroke="#1c0f6e" stroke-width="1.1"/></svg>
  <svg class="abs" style="left:7px;top:135px" width="12" height="9" viewBox="0 0 12 9"><rect x="0" y="0.5" width="7" height="7.5" rx="1" fill="#444"/><path d="M8 3.5 L11.2 1.2 V7.3 L8 5 Z" fill="#444"/></svg>
  <div class="abs t mt" style="left:28px;top:129.5px;width:235px;font-size:14px;font-weight:bold;color:#454545;white-space:nowrap;overflow:hidden;letter-spacing:-0.15px"></div>
</div></div><!--/cards-->

  <!-- right panel -->
  <div class="abs" style="left:792px;top:155px;width:1110px;height:227px;background:#f2f2f2;border-radius:4px"></div>
  <div class="abs t" style="left:802px;top:169px;font-size:14.4px;font-weight:bold;color:#3c3c3c">Ítems de la lista</div>
  <div class="abs t" style="left:918px;top:169px;width:19px;height:19px;background:#fff;border-radius:3px;font-size:10px;line-height:19px;text-align:center;color:#333">2</div>
  <div class="abs t" style="left:941px;top:169px;width:19px;height:19px;background:#3f3f3f;border-radius:3px;font-size:10px;line-height:19px;text-align:center;color:#fff;font-weight:bold">1</div>
  <div class="abs" style="left:797px;top:196px;width:1099px;height:181px;background:#fff;border-radius:3px"></div>
  <svg class="abs" style="left:1746px;top:170px" width="13" height="13" viewBox="0 0 13 13"><circle cx="5.5" cy="5.5" r="4.3" fill="none" stroke="#444" stroke-width="1.1"/><path d="M8.6 8.6 L12 12" stroke="#444" stroke-width="1.1"/></svg>
  <svg class="abs" style="left:1778px;top:170px" width="12" height="12" viewBox="0 0 12 12"><path d="M1 1.2 H5.5 L11 6.6 L6.6 11 L1 5.5 Z" fill="none" stroke="#444" stroke-width="1.1" stroke-linejoin="round"/><circle cx="3.6" cy="3.7" r="0.8" fill="#444"/></svg>
  <svg class="abs" style="left:1810px;top:170px" width="12" height="11" viewBox="0 0 12 11"><rect x="0.6" y="0.6" width="10.8" height="9.8" rx="1" fill="none" stroke="#444" stroke-width="1.1"/><path d="M0.6 3.8 H11.4 M0.6 7 H11.4 M4 0.6 V10.4" stroke="#444" stroke-width="1"/></svg>
  <svg class="abs" style="left:1840px;top:168px" width="15" height="16" viewBox="0 0 15 16"><path d="M2.2 6.5 A5.5 5.5 0 0 1 12.5 5" fill="none" stroke="#444" stroke-width="1.2"/><path d="M12.8 9.5 A5.5 5.5 0 0 1 2.5 11" fill="none" stroke="#444" stroke-width="1.2"/><path d="M13.5 2.2 L12.8 5.6 L9.6 4.6" fill="none" stroke="#444" stroke-width="1.2"/><path d="M1.5 13.8 L2.2 10.4 L5.4 11.4" fill="none" stroke="#444" stroke-width="1.2"/></svg>
  <svg class="abs" style="left:1878px;top:170px" width="4" height="12" viewBox="0 0 4 12"><circle cx="2" cy="1.5" r="0.9" fill="#444"/><circle cx="2" cy="6" r="0.9" fill="#444"/><circle cx="2" cy="10.5" r="0.9" fill="#444"/></svg>
  <div id="items"><div class="abs" style="left:802.5px;top:202px;width:176px;height:171px">
  <div class="abs" style="left:0;top:0;width:176px;height:171px;border-radius:7px;background:#dcdcdc;border:1px solid #d6d6d6;overflow:hidden">
    <div class="abs" style="left:-1px;top:-1px;width:177px;height:113px;background:#b5b5b5"></div>
    <div class="abs" style="left:-1px;top:7px;width:177px;height:96px;overflow:hidden"><svg class="abs" style="left:0;top:0" width="177" height="96" viewBox="0 0 177 96">
<defs><radialGradient id="n1" cx="48%" cy="42%" r="62%"><stop offset="0" stop-color="#c4dcd8"/><stop offset=".22" stop-color="#94b9b4"/><stop offset=".55" stop-color="#638a88"/><stop offset="1" stop-color="#46676a"/></radialGradient>
<radialGradient id="n2" cx="50%" cy="50%" r="50%"><stop offset="0" stop-color="#b6d4cf" stop-opacity=".9"/><stop offset="1" stop-color="#b6d4cf" stop-opacity="0"/></radialGradient></defs>
<rect width="177" height="96" fill="url(#n1)"/>
<ellipse cx="26" cy="48" rx="30" ry="50" fill="#3f5f62" opacity=".55"/>
<ellipse cx="165" cy="62" rx="22" ry="38" fill="#3f5d60" opacity=".6"/>
<ellipse cx="130" cy="48" rx="9" ry="40" fill="url(#n2)" transform="rotate(28 130 48)"/>
<ellipse cx="62" cy="45" rx="10" ry="38" fill="url(#n2)" transform="rotate(-15 62 45)"/>
<ellipse cx="57" cy="84" rx="15" ry="15" fill="#577a7a"/>
<path d="M44 73 A15 15 0 0 1 71 84" fill="none" stroke="#b0cfcb" stroke-width="1.6"/>
<circle cx="24" cy="85" r="5.5" fill="#4d6d6f"/><path d="M20 80.5 A5.5 5.5 0 0 1 29 85" fill="none" stroke="#a5c5c1" stroke-width="1"/>
<circle cx="98" cy="15" r="1.5" fill="#f0faf8"/><circle cx="6" cy="22" r="1.1" fill="#d8ece8"/><circle cx="13" cy="32" r="1" fill="#d0e4e0"/><circle cx="121" cy="32" r="1.2" fill="#e8f4f2"/><circle cx="25" cy="50" r=".9" fill="#cfe"/><circle cx="15" cy="68" r=".9" fill="#cfe"/><circle cx="100" cy="88" r="1.2" fill="#dfe"/><circle cx="160" cy="35" r=".8" fill="#cfe"/><circle cx="153" cy="88" r=".9" fill="#cfe"/><circle cx="40" cy="10" r=".8" fill="#cfe"/><circle cx="75" cy="8" r=".8" fill="#cfe"/>
<path d="M0 20 L12 0 L3 0 Z" fill="#a8cbc6"/>
</svg></div>
  </div>
  <div class="abs t" style="left:8px;top:7px;width:12px;height:18px;border-radius:6px;background:#fafafa;font-size:11px;line-height:18px;text-align:center;color:#333">1</div>
  <div class="abs" style="left:147px;top:4px;width:24px;height:24px;border-radius:4px;background:rgba(235,235,235,.92);box-shadow:0 0 3px rgba(255,255,255,.6)"></div>
  <svg class="abs" style="left:157px;top:10px" width="4" height="12" viewBox="0 0 4 12"><circle cx="2" cy="1.5" r="0.9" fill="#3b1fa0"/><circle cx="2" cy="6" r="0.9" fill="#3b1fa0"/><circle cx="2" cy="10.5" r="0.9" fill="#3b1fa0"/></svg>
  <svg class="abs" style="left:12px;top:122px" width="11" height="9.5" viewBox="0 0 11 9.5"><rect x="0" y="0" width="11" height="9.5" rx="1.2" fill="#666"/><path d="M1.5 8 L4 5 L6 7 L7.5 5.6 L9.5 8 Z" fill="#dcdcdc"/><circle cx="7.3" cy="2.9" r="1.1" fill="#dcdcdc"/></svg>
  <div class="abs t" style="left:26px;top:118px;font-size:13.5px;letter-spacing:0.35px;color:#777;white-space:nowrap">image_fx_ ...</div>
  <div class="abs t" style="left:145px;top:120px;width:24px;text-align:right;font-size:11px;color:#777">10s</div>
  <div class="abs" style="left:13px;top:145px;width:28px;height:12px;border-radius:6px;background:#ebebeb"></div><div class="abs" style="left:12px;top:143px;width:16px;height:16px;border-radius:50%;background:#8e8e8e"></div><div class="abs" style="left:5.7px;top:137px;width:41.6px;height:27px;border:3px solid #f00"></div>
  <svg class="abs" style="left:152px;top:145px" width="12" height="9" viewBox="0 0 12 9"><path d="M0.5 4.5 H8 M4.8 1.2 L8.1 4.5 L4.8 7.8" fill="none" stroke="#666" stroke-width="1.4"/><path d="M10.6 0.5 V8.5" stroke="#666" stroke-width="1.5"/></svg>
</div><div class="abs" style="left:985.5px;top:202px;width:175px;height:171px">
  <div class="abs" style="left:0;top:0;width:175px;height:171px;border-radius:7px;background:#fff;border:1px solid #dedede;overflow:hidden">
    <div class="abs" style="left:-1px;top:-1px;width:177px;height:113px;background:#b5b5b5"></div>
    <div class="abs" style="left:-1px;top:7px;width:177px;height:96px;overflow:hidden"><svg class="abs" style="left:0;top:0" width="177" height="96" viewBox="0 0 177 96">
<defs><linearGradient id="s2" x1="0" y1="0" x2="0" y2="1"><stop offset="0" stop-color="#0a100f"/><stop offset=".12" stop-color="#0e1815"/><stop offset=".35" stop-color="#153a32"/><stop offset=".55" stop-color="#227060"/><stop offset=".7" stop-color="#35a084"/><stop offset=".78" stop-color="#3a9a7e"/><stop offset=".8" stop-color="#2f2c22"/><stop offset=".93" stop-color="#1d1b15"/><stop offset=".94" stop-color="#030303"/><stop offset="1" stop-color="#000"/></linearGradient>
<radialGradient id="sat" cx="35%" cy="40%" r="70%"><stop offset="0" stop-color="#f0e4c8"/><stop offset=".45" stop-color="#c9a577"/><stop offset=".75" stop-color="#4a4436"/><stop offset="1" stop-color="#111"/></radialGradient></defs>
<rect width="177" height="96" fill="url(#s2)"/>
<rect x="0" y="0" width="177" height="4" fill="#000"/>
<ellipse cx="75" cy="25" rx="32" ry="10" fill="#3a4a55" opacity=".22" transform="rotate(25 75 25)"/>
<circle cx="120" cy="38" r="16" fill="url(#sat)"/>
<ellipse cx="120" cy="36" rx="36" ry="8" fill="none" stroke="#b6c2b0" stroke-width="2.2" transform="rotate(-38 120 36)"/>
<path d="M0 82 Q20 76 40 78 Q70 72 100 77 Q140 75 177 78 V90 H0 Z" fill="#2b271d"/>
<rect x="51" y="51" width="12" height="15" rx="3" fill="#c9cecc"/><circle cx="57" cy="48" r="3.2" fill="#2a2a2a" stroke="#bbb" stroke-width=".8"/><rect x="52" y="65" width="4" height="19" fill="#c0c5c3"/><rect x="58" y="65" width="4" height="19" fill="#c0c5c3"/>
</svg></div>
  </div>
  <div class="abs t" style="left:8px;top:7px;width:12px;height:18px;border-radius:6px;background:#fafafa;font-size:11px;line-height:18px;text-align:center;color:#333">2</div>
  <div class="abs" style="left:147px;top:4px;width:24px;height:24px;border-radius:4px;background:rgba(235,235,235,.92);box-shadow:0 0 3px rgba(255,255,255,.6)"></div>
  <svg class="abs" style="left:157px;top:10px" width="4" height="12" viewBox="0 0 4 12"><circle cx="2" cy="1.5" r="0.9" fill="#3b1fa0"/><circle cx="2" cy="6" r="0.9" fill="#3b1fa0"/><circle cx="2" cy="10.5" r="0.9" fill="#3b1fa0"/></svg>
  <svg class="abs" style="left:12px;top:122px" width="11" height="9.5" viewBox="0 0 11 9.5"><rect x="0" y="0" width="11" height="9.5" rx="1.2" fill="#333"/><path d="M1.5 8 L4 5 L6 7 L7.5 5.6 L9.5 8 Z" fill="#fff"/><circle cx="7.3" cy="2.9" r="1.1" fill="#fff"/></svg>
  <div class="abs t" style="left:26px;top:118px;font-size:13.5px;letter-spacing:0.35px;color:#333;white-space:nowrap">image_fx_ ...</div>
  <div class="abs t" style="left:145px;top:120px;width:24px;text-align:right;font-size:11px;color:#333">10s</div>
  <div class="abs" style="left:12px;top:145px;width:22px;height:12px;border-radius:6px;background:#c5ebe3"></div><div class="abs" style="left:25px;top:143px;width:16px;height:16px;border-radius:50%;background:#5fc9b2"></div>
  <svg class="abs" style="left:152px;top:145px" width="12" height="9" viewBox="0 0 12 9"><path d="M0.5 4.5 H8 M4.8 1.2 L8.1 4.5 L4.8 7.8" fill="none" stroke="#333" stroke-width="1.4"/><path d="M10.6 0.5 V8.5" stroke="#333" stroke-width="1.5"/></svg>
</div><div class="abs" style="left:1167.5px;top:202px;width:176px;height:171px">
  <div class="abs" style="left:0;top:0;width:176px;height:171px;border-radius:7px;background:#fff;border:1px solid #dedede;overflow:hidden">
    <div class="abs" style="left:-1px;top:-1px;width:177px;height:113px;background:#b5b5b5"></div>
    <div class="abs" style="left:-1px;top:7px;width:177px;height:96px;overflow:hidden"><svg class="abs" style="left:0;top:0" width="177" height="96" viewBox="0 0 177 96">
<rect width="177" height="96" fill="#060707"/>
<path d="M10 30 Q30 15 50 10 M20 45 Q50 25 80 15 M120 30 Q150 10 175 5 M140 90 Q160 70 177 55 M100 55 Q140 40 177 25" stroke="#151819" stroke-width="3" fill="none"/>
<path d="M1 64 L46 43 M12 88 L38 76" stroke="#8a8068" stroke-width=".7"/>
<circle cx="86" cy="25" r="7" fill="#333434" stroke="#9a978a" stroke-width="1"/>
<path d="M76 33 Q86 29 96 33 L100 55 L97 60 L93 57 L92 70 L94 80 L90 82 L87 72 L85 80 L83 88 L78 86 L80 70 L78 57 L74 60 L72 55 Z" fill="#2e2f2f" stroke="#8f8c80" stroke-width=".9"/>
<path d="M68 35 Q66 28 74 31 L80 36 Q74 46 70 50 Q67 55 73 53 L82 48 M100 48 Q120 45 125 58 Q135 68 148 66 Q165 64 177 70" fill="none" stroke="#a59a7a" stroke-width=".8"/>
<circle cx="39" cy="6" r=".9" fill="#cdbb8a"/><circle cx="112" cy="57" r="1" fill="#cdbb8a"/><circle cx="62" cy="89" r="1" fill="#cdbb8a"/><circle cx="144" cy="18" r=".8" fill="#cdbb8a"/>
<path d="M125 10 A8 8 0 0 0 133 26" fill="none" stroke="#3a3c3c" stroke-width="1"/>
</svg></div>
  </div>
  <div class="abs t" style="left:8px;top:7px;width:12px;height:18px;border-radius:6px;background:#fafafa;font-size:11px;line-height:18px;text-align:center;color:#333">3</div>
  <div class="abs" style="left:147px;top:4px;width:24px;height:24px;border-radius:4px;background:rgba(235,235,235,.92);box-shadow:0 0 3px rgba(255,255,255,.6)"></div>
  <svg class="abs" style="left:157px;top:10px" width="4" height="12" viewBox="0 0 4 12"><circle cx="2" cy="1.5" r="0.9" fill="#3b1fa0"/><circle cx="2" cy="6" r="0.9" fill="#3b1fa0"/><circle cx="2" cy="10.5" r="0.9" fill="#3b1fa0"/></svg>
  <svg class="abs" style="left:12px;top:122px" width="11" height="9.5" viewBox="0 0 11 9.5"><rect x="0" y="0" width="11" height="9.5" rx="1.2" fill="#333"/><path d="M1.5 8 L4 5 L6 7 L7.5 5.6 L9.5 8 Z" fill="#fff"/><circle cx="7.3" cy="2.9" r="1.1" fill="#fff"/></svg>
  <div class="abs t" style="left:26px;top:118px;font-size:13.5px;letter-spacing:-0.7px;color:#333;white-space:nowrap">414141.jpg</div>
  <div class="abs t" style="left:145px;top:120px;width:24px;text-align:right;font-size:11px;color:#333">10s</div>
  <div class="abs" style="left:12px;top:145px;width:22px;height:12px;border-radius:6px;background:#c5ebe3"></div><div class="abs" style="left:25px;top:143px;width:16px;height:16px;border-radius:50%;background:#5fc9b2"></div>
  <svg class="abs" style="left:152px;top:145px" width="12" height="9" viewBox="0 0 12 9"><path d="M0.5 4.5 H8 M4.8 1.2 L8.1 4.5 L4.8 7.8" fill="none" stroke="#333" stroke-width="1.4"/><path d="M10.6 0.5 V8.5" stroke="#333" stroke-width="1.5"/></svg>
</div></div><!--/items-->
</div>

</body></html>
